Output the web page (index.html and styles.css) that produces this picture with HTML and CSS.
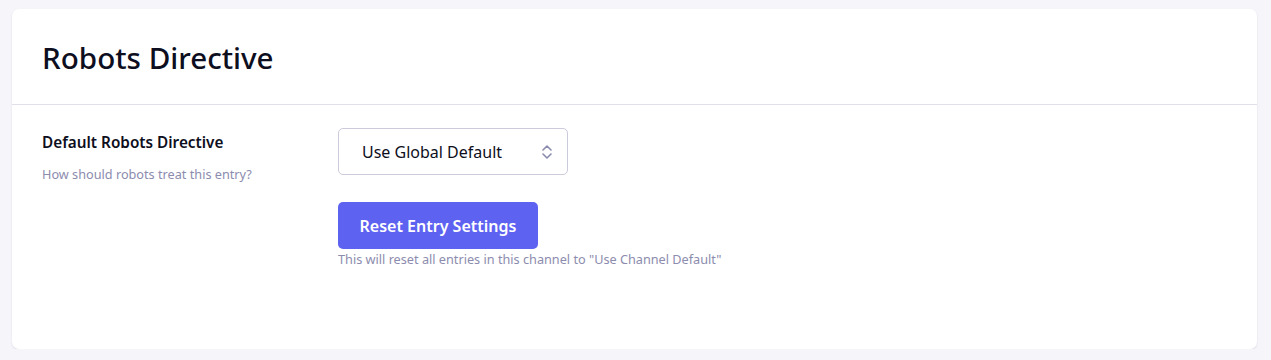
FILE: index.html
```html
<!DOCTYPE html>
<html lang="en">
<head>
    <meta charset="UTF-8">
    <title>Robots Directive</title>
    <link rel="stylesheet" href="styles.css">
</head>
<body>
    <!-- Settings card -->
    <div class="card">
        <div class="card-header">
            <h1>Robots Directive</h1>
        </div>

        <div class="card-body">
            <div class="field-info">
                <div class="field-label">Default Robots Directive</div>
                <div class="field-desc">How should robots treat this entry?</div>
            </div>

            <div class="field-controls">
                <div class="select">
                    <span>Use Global Default</span>
                    <svg class="select-arrows" width="12" height="18" viewBox="0 0 12 18" fill="none" stroke="#8a8aae" stroke-width="1.6" stroke-linecap="round" stroke-linejoin="round">
                        <path d="M2 7 L6 3 L10 7"/>
                        <path d="M2 11 L6 15 L10 11"/>
                    </svg>
                </div>

                <button class="reset-button">Reset Entry Settings</button>
                <p class="help-text">This will reset all entries in this channel to "Use Channel Default"</p>
            </div>
        </div>
    </div>
</body>
</html>
```

FILE: styles.css
```css
/* Page */
body {
    margin: 0;
    padding: 9px 14px 0 12px;
    background-color: #f5f5fa;
    font-family: "Noto Sans", "Open Sans", sans-serif;
    color: #0d0e20;
}

/* Card */
.card {
    background-color: white;
    border-radius: 7px;
    height: 340px;
    box-shadow: 0 1px 2px rgba(40, 40, 80, 0.12);
}

.card-header {
    height: 95px;
    padding: 0 30px;
    display: flex;
    align-items: center;
    border-bottom: 1px solid #e0e0ea;
}

h1 {
    margin: 0 0 -2px 0;
    font-size: 29.6px;
    font-weight: 500;
}

.card-body {
    display: flex;
    padding: 23px 30px;
}

/* Left column */
.field-info {
    width: 296px;
}

.field-label {
    font-size: 15.3px;
    font-weight: 600;
    margin-top: 4px;
}

.field-desc {
    font-size: 12.7px;
    color: #8c8cae;
    margin-top: 13px;
}

/* Right column */
.field-controls {
    display: flex;
    flex-direction: column;
    align-items: flex-start;
}

.select {
    width: 230px;
    height: 47px;
    border: 1px solid #cbcbdc;
    border-radius: 5px;
    display: flex;
    align-items: center;
    justify-content: space-between;
    padding: 0 14px 0 23px;
    box-sizing: border-box;
    font-size: 16px;
}

.select-arrows {
    display: block;
}

.reset-button {
    margin-top: 27px;
    width: 200px;
    height: 47px;
    border: none;
    border-radius: 5px;
    background-color: #5e62f1;
    color: white;
    font-family: inherit;
    font-size: 16px;
    font-weight: 600;
}

.help-text {
    margin: 1px 0 0 0;
    font-size: 12.7px;
    color: #8c8cae;
}
```
